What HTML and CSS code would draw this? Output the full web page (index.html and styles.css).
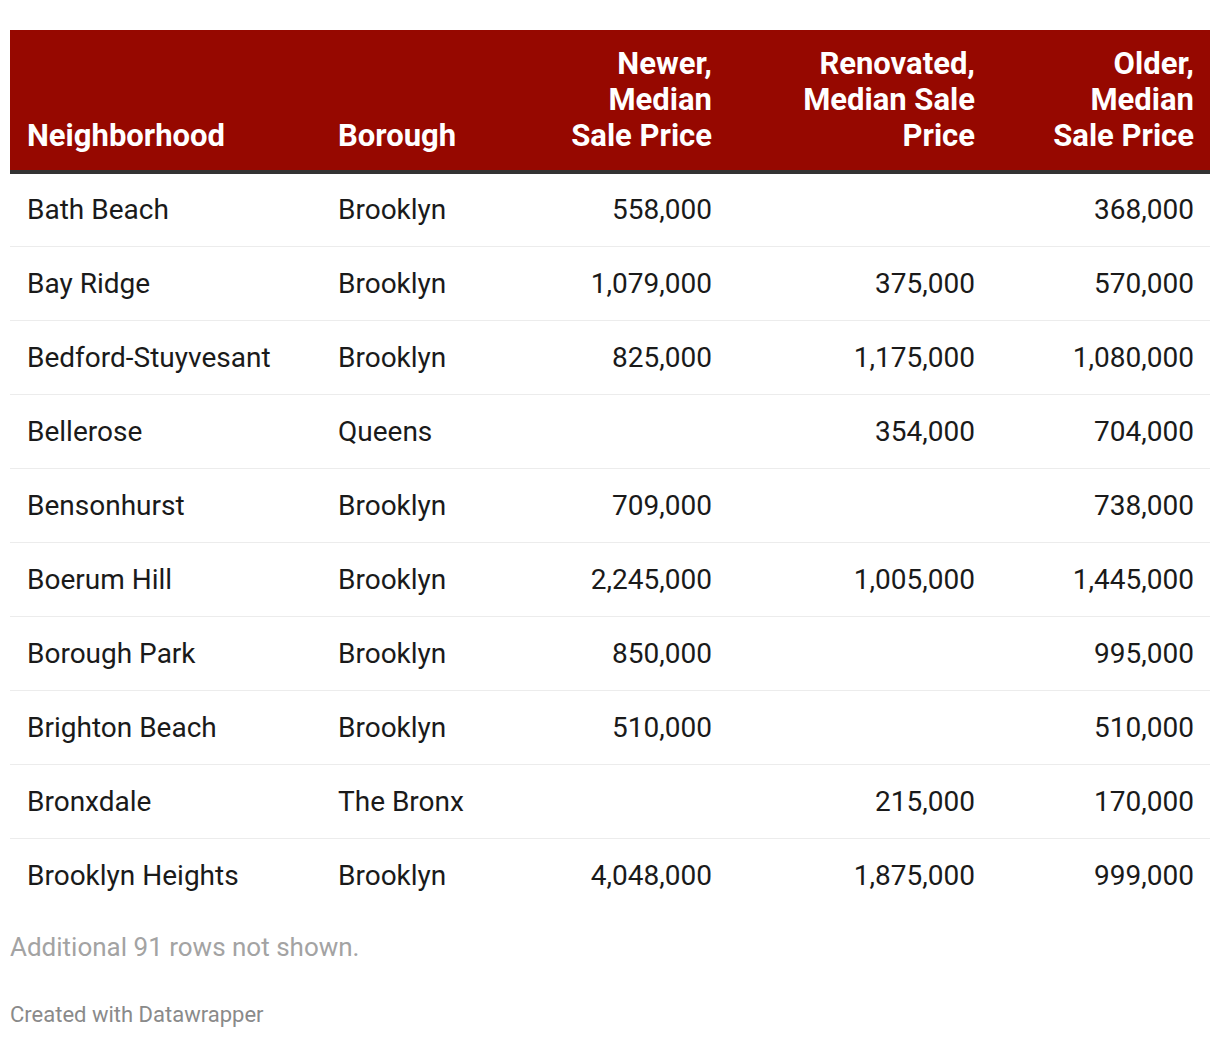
FILE: index.html
```html
<!DOCTYPE html>
<html lang="en">
<head>
<meta charset="utf-8">
<title>Median Sale Price by Neighborhood</title>
<link rel="stylesheet" href="styles.css">
</head>
<body>
<div class="chart">
  <table class="data-table">
    <colgroup>
      <col class="c1"><col class="c2"><col class="c3"><col class="c4"><col class="c5">
    </colgroup>
    <thead>
      <tr>
        <th class="txt">Neighborhood</th>
        <th class="txt">Borough</th>
        <th class="num n3">Newer, Median Sale Price</th>
        <th class="num n4">Renovated, Median Sale Price</th>
        <th class="num n5">Older, Median Sale Price</th>
      </tr>
    </thead>
    <tbody>
      <tr><td class="txt">Bath Beach</td><td class="txt">Brooklyn</td><td class="num">558,000</td><td class="num"></td><td class="num">368,000</td></tr>
      <tr><td class="txt">Bay Ridge</td><td class="txt">Brooklyn</td><td class="num">1,079,000</td><td class="num">375,000</td><td class="num">570,000</td></tr>
      <tr><td class="txt">Bedford-Stuyvesant</td><td class="txt">Brooklyn</td><td class="num">825,000</td><td class="num">1,175,000</td><td class="num">1,080,000</td></tr>
      <tr><td class="txt">Bellerose</td><td class="txt">Queens</td><td class="num"></td><td class="num">354,000</td><td class="num">704,000</td></tr>
      <tr><td class="txt">Bensonhurst</td><td class="txt">Brooklyn</td><td class="num">709,000</td><td class="num"></td><td class="num">738,000</td></tr>
      <tr><td class="txt">Boerum Hill</td><td class="txt">Brooklyn</td><td class="num">2,245,000</td><td class="num">1,005,000</td><td class="num">1,445,000</td></tr>
      <tr><td class="txt">Borough Park</td><td class="txt">Brooklyn</td><td class="num">850,000</td><td class="num"></td><td class="num">995,000</td></tr>
      <tr><td class="txt">Brighton Beach</td><td class="txt">Brooklyn</td><td class="num">510,000</td><td class="num"></td><td class="num">510,000</td></tr>
      <tr><td class="txt">Bronxdale</td><td class="txt">The Bronx</td><td class="num"></td><td class="num">215,000</td><td class="num">170,000</td></tr>
      <tr><td class="txt">Brooklyn Heights</td><td class="txt">Brooklyn</td><td class="num">4,048,000</td><td class="num">1,875,000</td><td class="num">999,000</td></tr>
    </tbody>
  </table>
  <p class="more-rows">Additional 91 rows not shown.</p>
  <p class="credit">Created with Datawrapper</p>
</div>
</body>
</html>
```

FILE: styles.css
```css
html, body {
  margin: 0;
  padding: 0;
  background: #ffffff;
}

body {
  font-family: Roboto, "Liberation Sans", Arial, sans-serif;
  color: #1a1a1a;
}

.chart {
  padding: 30px 10px 0 10px;
}

.data-table {
  width: 1200px;
  border-collapse: collapse;
  table-layout: fixed;
}

.c1 { width: 311px; }
.c2 { width: 231px; }
.c3 { width: 176px; }
.c4 { width: 263px; }
.c5 { width: 219px; }

.data-table th {
  background: #960800;
  color: #ffffff;
  font-weight: 700;
  font-size: 31px;
  line-height: 36px;
  vertical-align: bottom;
  padding: 16px 16px 16px 17px;
  border-bottom: 4px solid #333333;
}

.data-table th.txt { text-align: left; }
.data-table th.num { text-align: right; }
.data-table th.n3 { padding-left: 5px; }
.data-table th.n5 { padding-left: 48px; }

.data-table td {
  font-size: 28px;
  line-height: 32px;
  height: 74px;
  padding: 1px 16px 0 17px;
  vertical-align: middle;
  border-bottom: 1px solid #ececec;
  box-sizing: border-box;
}

.data-table tbody tr:last-child td {
  border-bottom: none;
}

.data-table td.num { text-align: right; }

.more-rows {
  margin: 20px 0 0 0;
  font-size: 26px;
  line-height: 30px;
  color: #a3a3a3;
}

.credit {
  margin: 40px 0 0 0;
  font-size: 22px;
  line-height: 26px;
  color: #8a8a8a;
}
```
